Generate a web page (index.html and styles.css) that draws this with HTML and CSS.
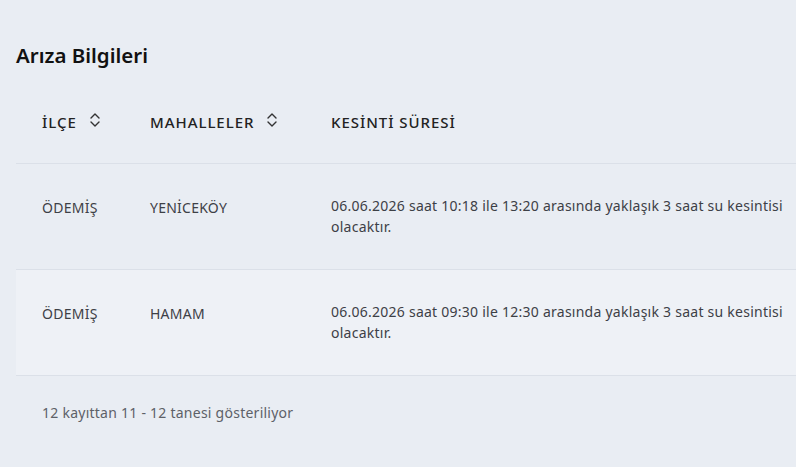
FILE: index.html
```html
<!DOCTYPE html>
<html lang="tr">
<head>
<meta charset="utf-8">
<link rel="stylesheet" href="styles.css">
</head>
<body>
<div class="page">
  <h2 class="title">Arıza Bilgileri</h2>
  <div class="table-wrap">
    <table class="grid">
      <thead>
        <tr>
          <th class="col-ilce"><span class="th-inner">İLÇE <svg class="sort" viewBox="0 0 12 16" width="12" height="16"><path d="M2 6 L6 2 L10 6 M2 10 L6 14 L10 10" fill="none" stroke="#333" stroke-width="1.4" stroke-linecap="round" stroke-linejoin="round"/></svg></span></th>
          <th class="col-mah"><span class="th-inner">MAHALLELER <svg class="sort" viewBox="0 0 12 16" width="12" height="16"><path d="M2 6 L6 2 L10 6 M2 10 L6 14 L10 10" fill="none" stroke="#333" stroke-width="1.4" stroke-linecap="round" stroke-linejoin="round"/></svg></span></th>
          <th class="col-sure">KESİNTİ SÜRESİ</th>
        </tr>
      </thead>
      <tbody>
        <tr>
          <td>ÖDEMİŞ</td>
          <td>YENİCEKÖY</td>
          <td>06.06.2026 saat 10:18 ile 13:20 arasında yaklaşık 3 saat su kesintisi olacaktır.</td>
        </tr>
        <tr class="alt">
          <td>ÖDEMİŞ</td>
          <td>HAMAM</td>
          <td>06.06.2026 saat 09:30 ile 12:30 arasında yaklaşık 3 saat su kesintisi olacaktır.</td>
        </tr>
      </tbody>
    </table>
  </div>
  <div class="info">12 kayıttan 11 - 12 tanesi gösteriliyor</div>
</div>
</body>
</html>
```
FILE: styles.css
```css
html, body {
  margin: 0;
  padding: 0;
  background: #e9edf3;
  overflow: hidden;
}
.page {
  padding: 43px 0 0 16px;
  font-family: "Noto Sans", "Open Sans", sans-serif;
  color: #3a3d42;
}
.title {
  margin: 0;
  font-size: 20.5px;
  line-height: 24px;
  font-weight: 600;
  color: #111;
}
.table-wrap {
  margin-top: 15px;
  overflow: hidden;
}
.grid {
  border-collapse: collapse;
  table-layout: fixed;
  width: 900px;
}
.grid th {
  height: 81px;
  padding: 0 0 0 26px;
  text-align: left;
  font-size: 15px;
  font-weight: 500;
  letter-spacing: 0.95px;
  color: #222;
  border-bottom: 1px solid #dbe0e8;
  box-sizing: border-box;
}
.th-inner {
  display: inline-flex;
  align-items: center;
  gap: 12px;
}
.sort {
  display: block;
  margin-top: -4px;
}
.col-ilce { width: 108px; }
.col-mah { width: 181px; }
.col-sure { width: 611px; }
.grid td {
  height: 106px;
  box-sizing: border-box;
  padding: 0 100px 0 26px;
  font-size: 14px;
  line-height: 21px;
  letter-spacing: 0.25px;
  vertical-align: middle;
  color: #3d4046;
  border-bottom: 1px solid #dbe0e8;
}
.grid td:first-child, .grid td:nth-child(2) {
  padding-right: 0;
  vertical-align: top;
  padding-top: 33px;
}
.grid tr.alt td {
  background: #eef1f6;
}
.info {
  margin-top: 27px;
  padding-left: 26px;
  font-size: 14px;
  line-height: 20px;
  letter-spacing: 0.25px;
  color: #5d6168;
}
```
